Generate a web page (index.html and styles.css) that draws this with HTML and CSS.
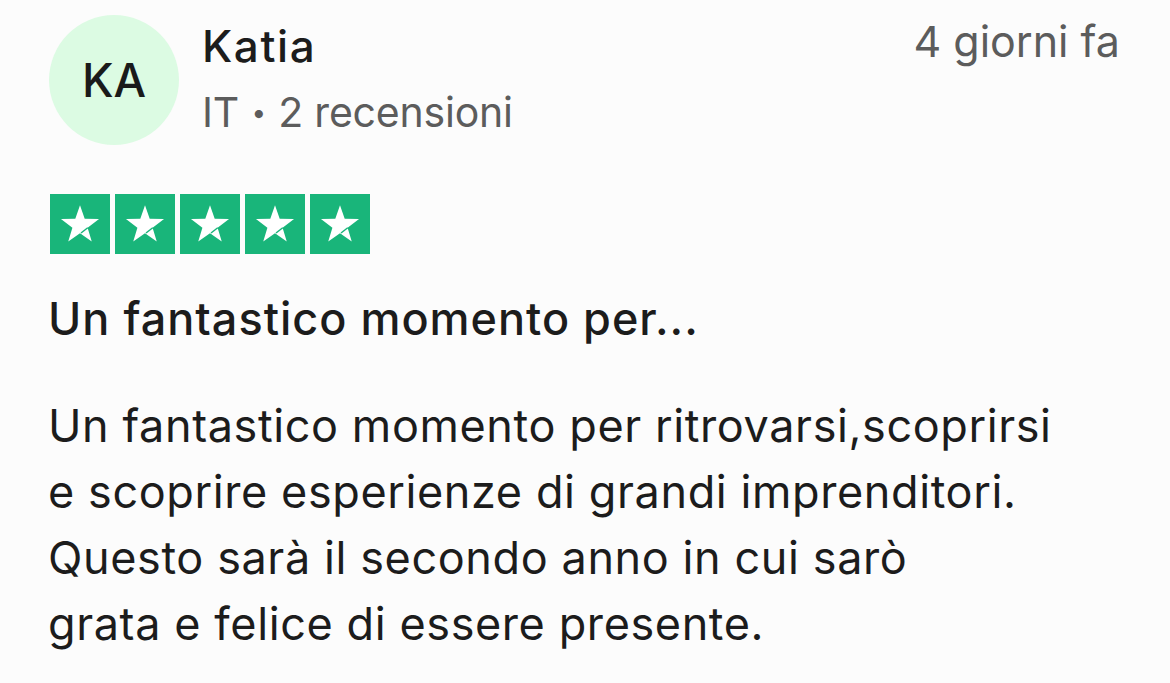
FILE: index.html
```html
<!DOCTYPE html>
<html lang="it">
<head>
    <meta charset="UTF-8">
    <title>Recensione - Katia</title>
    <link rel="stylesheet" href="styles.css">
</head>
<body>

<div class="review">
    <div class="review-head">
        <div class="avatar">KA</div>
        <div class="author">
            <div class="author-name">Katia</div>
            <div class="author-meta">IT <span class="dot">•</span> 2 recensioni</div>
        </div>
        <div class="review-date">4 giorni fa</div>
    </div>

    <div class="stars">
        <span class="star"><svg viewBox="0 0 24 24"><polygon points="12,4.5 13.88,9.91 19.61,10.03 15.04,13.49 16.7,18.97 12,15.7 7.3,18.97 8.96,13.49 4.39,10.03 10.12,9.91"/><line x1="15.1" y1="13.5" x2="12.4" y2="15.6"/></svg></span>
        <span class="star"><svg viewBox="0 0 24 24"><polygon points="12,4.5 13.88,9.91 19.61,10.03 15.04,13.49 16.7,18.97 12,15.7 7.3,18.97 8.96,13.49 4.39,10.03 10.12,9.91"/><line x1="15.1" y1="13.5" x2="12.4" y2="15.6"/></svg></span>
        <span class="star"><svg viewBox="0 0 24 24"><polygon points="12,4.5 13.88,9.91 19.61,10.03 15.04,13.49 16.7,18.97 12,15.7 7.3,18.97 8.96,13.49 4.39,10.03 10.12,9.91"/><line x1="15.1" y1="13.5" x2="12.4" y2="15.6"/></svg></span>
        <span class="star"><svg viewBox="0 0 24 24"><polygon points="12,4.5 13.88,9.91 19.61,10.03 15.04,13.49 16.7,18.97 12,15.7 7.3,18.97 8.96,13.49 4.39,10.03 10.12,9.91"/><line x1="15.1" y1="13.5" x2="12.4" y2="15.6"/></svg></span>
        <span class="star"><svg viewBox="0 0 24 24"><polygon points="12,4.5 13.88,9.91 19.61,10.03 15.04,13.49 16.7,18.97 12,15.7 7.3,18.97 8.96,13.49 4.39,10.03 10.12,9.91"/><line x1="15.1" y1="13.5" x2="12.4" y2="15.6"/></svg></span>
    </div>

    <h2 class="review-title">Un fantastico momento per...</h2>

    <p class="review-text">Un fantastico momento per ritrovarsi,scoprirsi<br>
    e scoprire esperienze di grandi imprenditori.<br>
    Questo sarà il secondo anno in cui sarò<br>
    grata e felice di essere presente.</p>
</div>

</body>
</html>
```

FILE: styles.css
```css
* {
    box-sizing: border-box;
}

body {
    margin: 0;
    font-family: Inter, Roboto, sans-serif;
    background-color: #fcfcfc;
    color: #1c1c1c;
}

.review {
    padding: 15px 50px 0 48px;
}

.review-head {
    display: flex;
    align-items: flex-start;
}

.avatar {
    width: 130px;
    height: 130px;
    margin-left: 1px;
    border-radius: 50%;
    background-color: #dcfbe3;
    color: #1a1a1a;
    font-size: 46px;
    font-weight: 500;
    display: flex;
    align-items: center;
    justify-content: center;
    flex-shrink: 0;
}

.author {
    flex: 1;
    margin-left: 23px;
    margin-top: 4px;
}

.author-name {
    font-size: 44px;
    font-weight: 500;
    line-height: 56px;
    letter-spacing: 1.6px;
    margin-top: -1px;
}

.author-meta {
    font-size: 41px;
    color: #5c5c5c;
    line-height: 56px;
    margin-top: 10px;
    letter-spacing: -0.2px;
}

.author-meta .dot {
    font-size: 26px;
    vertical-align: 5px;
    margin: 0 1px;
}

.review-date {
    font-size: 43px;
    color: #5c5c5c;
    line-height: 56px;
    margin-top: -2px;
}

.stars {
    display: flex;
    gap: 5px;
    margin: 49px 0 0 2px;
}

.star {
    width: 60px;
    height: 60px;
    background-color: #19b57a;
    display: flex;
}

.star svg {
    width: 60px;
    height: 60px;
}

.star polygon {
    fill: white;
}

.star line {
    stroke: #19b57a;
    stroke-width: 0.6;
}

.review-title {
    font-size: 45px;
    font-weight: 500;
    letter-spacing: 1px;
    margin: 37px 0 0;
    line-height: 56px;
}

.review-text {
    font-size: 45px;
    line-height: 66px;
    letter-spacing: 0.6px;
    margin: 46px 0 0;
}
```
